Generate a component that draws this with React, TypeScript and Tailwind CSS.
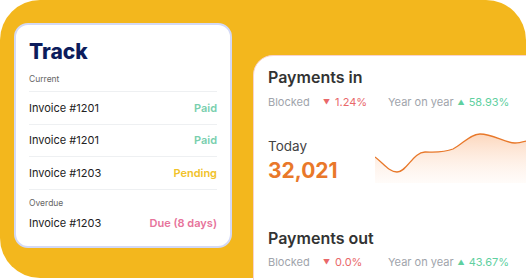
import React from "react";

const font = { fontFamily: "Inter, 'Noto Sans', sans-serif" };

function InvoiceRow({ name, status, color }: { name: string; status: string; color: string }) {
  return (
    <div className="flex h-[32.5px] items-center justify-between border-t border-[#eef0f2]">
      <span className="text-[11px] text-[#222]">{name}</span>
      <span className={`text-[11px] font-semibold ${color}`}>{status}</span>
    </div>
  );
}

function Stats({ blocked, yoy }: { blocked: string; yoy: string }) {
  return (
    <div className="flex h-[14px] items-center text-[11px] text-[#a0a4ab]">
      <span className="w-[55px]">Blocked</span>
      <span className="w-[65px] text-[#e9686a]">
        <span className="mr-[5px] text-[7px] align-[1px]">▼</span>
        {blocked}
      </span>
      <span>Year on year</span>
      <span className="ml-[4px] text-[#5fd09f]">
        <span className="mr-[4px] text-[7px] align-[1px]">▲</span>
        {yoy}
      </span>
    </div>
  );
}

function Spark() {
  return (
    <svg width="177" height="58" viewBox="0 0 177 58" className="shrink-0">
      <defs>
        <linearGradient id="fill" x1="0" y1="0" x2="0" y2="1">
          <stop offset="0%" stopColor="#fcd7bd" />
          <stop offset="100%" stopColor="#fff6f0" stopOpacity="0.4" />
        </linearGradient>
      </defs>
      <path
        d="M0 32 C8 38 14 47 22 47 C32 47 38 27 50 27 C60 27 68 28 78 24 C88 19 95 9 105 9 C118 9 130 18 140 18 C148 18 154 14 177 11 L177 58 L0 58 Z"
        fill="url(#fill)"
      />
      <path
        d="M0 32 C8 38 14 47 22 47 C32 47 38 27 50 27 C60 27 68 28 78 24 C88 19 95 9 105 9 C118 9 130 18 140 18 C148 18 154 14 177 11"
        fill="none"
        stroke="#e8782a"
        strokeWidth="1.3"
      />
    </svg>
  );
}

export default function App() {
  return (
    <div className="relative h-[280px] w-[526px] overflow-hidden bg-white" style={font}>
      <div className="flex h-[278px] w-[526px] rounded-[40px] bg-[#f3b71d]">
        <div className="ml-[14px] mt-[23px] h-[225px] w-[218px] shrink-0 rounded-[14px] border-2 border-[#d3d9f6] bg-white px-[13px] pt-[12px]">
          <div className="h-[30px] text-[21px] font-extrabold leading-[30px] text-[#0c1c5c]">Track</div>
          <div className="mt-[5px] h-[14px] pb-[5px] text-[8.5px] leading-[14px] text-[#666]">Current</div>
          <div className="mt-[5px]">
            <InvoiceRow name="Invoice #1201" status="Paid" color="text-[#79cfae]" />
            <InvoiceRow name="Invoice #1201" status="Paid" color="text-[#79cfae]" />
            <InvoiceRow name="Invoice #1203" status="Pending" color="text-[#f1c22a]" />
          </div>
          <div className="h-[21px] border-t border-[#eef0f2] pt-[6px] text-[8.5px] leading-[14px] text-[#666]">
            Overdue
          </div>
          <div className="flex h-[28px] items-center justify-between">
            <span className="text-[11px] text-[#222]">Invoice #1203</span>
            <span className="text-[11px] font-semibold text-[#e7739b]">Due (8 days)</span>
          </div>
        </div>

        <div className="ml-[21px] mt-[55px] h-[240px] w-[300px] shrink-0 rounded-tl-[20px] border border-[#f8d3cc] bg-white pl-[14px] pt-[11px]">
          <div className="h-[20px] text-[16px] font-semibold leading-[20px] text-[#333]">Payments in</div>
          <div className="mt-[8px]">
            <Stats blocked="1.24%" yoy="58.93%" />
          </div>
          <div className="mt-[16px] flex">
            <div className="w-[107px] shrink-0 pt-[12px]">
              <div className="h-[18px] text-[13.5px] leading-[18px] text-[#444]">Today</div>
              <div className="mt-[3px] h-[26px] text-[21px] font-bold leading-[26px] text-[#e9782a]">32,021</div>
            </div>
            <Spark />
          </div>
          <div className="mt-[44px] h-[20px] text-[16px] font-semibold leading-[20px] text-[#333]">Payments out</div>
          <div className="mt-[7px]">
            <Stats blocked="0.0%" yoy="43.67%" />
          </div>
        </div>
      </div>
    </div>
  );
}
